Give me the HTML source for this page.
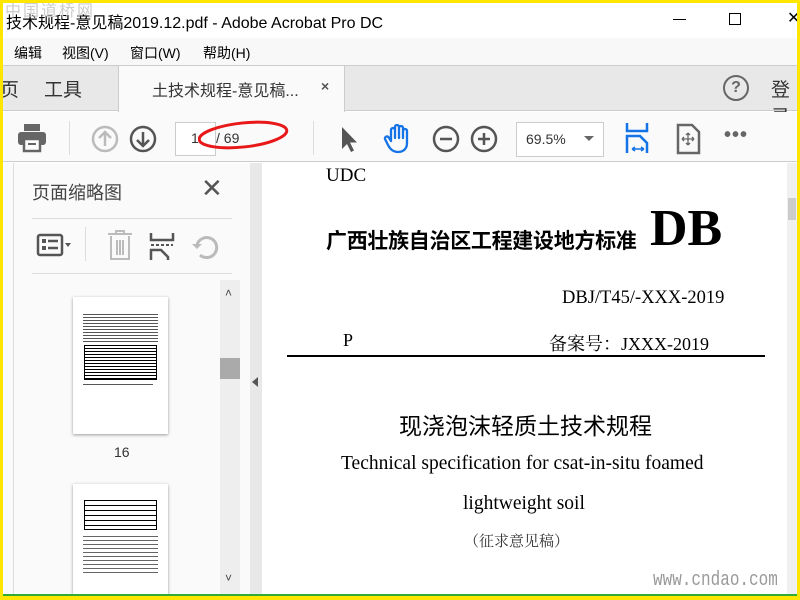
<!DOCTYPE html><html><head><meta charset="utf-8"><style>
*{margin:0;padding:0;box-sizing:border-box}
body{width:800px;height:600px;overflow:hidden;background:#ffe600;position:relative;font-family:"Liberation Sans","Noto Sans CJK SC",sans-serif}
.a{position:absolute}
.cj{font-family:"Noto Sans CJK SC",sans-serif}
.se{font-family:"Liberation Serif","Noto Serif CJK SC",serif;color:#000}
</style></head><body>
<div class="a" style="left:3px;top:3px;width:794px;height:593px;background:#fff;overflow:hidden">
 <div class="a" style="left:3px;top:6px;font-size:16px;color:#000">技术规程-意见稿2019.12.pdf - Adobe Acrobat Pro DC</div>
 <div class="a cj" style="left:2px;top:-6px;font-size:16px;color:#ccc;letter-spacing:2px">中国道桥网</div>
 <div class="a" style="left:670px;top:16px;width:13px;height:1px;background:#000"></div>
 <div class="a" style="left:726px;top:10px;width:12px;height:12px;border:1px solid #000"></div>
 <div class="a" style="left:784px;top:5px;font-size:16px">✕</div>
 <div class="a" style="left:0;top:35px;width:794px;height:28px;background:#f8f8f8;border-bottom:1px solid #ccc;font-size:14px;color:#000">
  <span class="a" style="left:11px;top:5px">编辑</span><span class="a" style="left:59px;top:5px">视图(V)</span><span class="a" style="left:127px;top:5px">窗口(W)</span><span class="a" style="left:200px;top:5px">帮助(H)</span>
 </div>
 <div class="a" style="left:0;top:63px;width:794px;height:45px;background:#e8e8e8;border-bottom:1px solid #ccc"></div>
 <div class="a" style="left:115px;top:63px;width:227px;height:46px;background:#fafafa;border-left:1px solid #ccc;border-right:1px solid #ccc"></div>
 <div class="a" style="left:-3px;top:72px;font-size:19px;color:#333">页</div>
 <div class="a" style="left:41px;top:72px;font-size:19px;color:#333">工具</div>
 <div class="a" style="left:149px;top:74px;font-size:16px;color:#333">土技术规程-意见稿...</div>
 <div class="a" style="left:318px;top:75px;font-size:14px;color:#555;font-weight:bold">×</div>
 <div class="a" style="left:720px;top:72px;width:26px;height:26px;border:2.5px solid #666;border-radius:50%;text-align:center;font-size:16px;font-weight:bold;color:#666;line-height:21px">?</div>
 <div class="a" style="left:768px;top:72px;font-size:19px;color:#333">登录</div>
 <div class="a" style="left:0;top:109px;width:794px;height:50px;background:#fafafa;border-bottom:1px solid #ccc"></div>
 <svg class="a" style="left:14px;top:120px" width="30" height="30" viewBox="0 0 30 30"><rect x="7" y="1" width="16" height="7" fill="#666"/><rect x="1" y="9" width="28" height="13" rx="3" fill="#666"/><rect x="7" y="16" width="16" height="12" fill="#fff" stroke="#666" stroke-width="2.5"/><line x1="11" y1="21" x2="19" y2="21" stroke="#666" stroke-width="2"/></svg>
 <div class="a" style="left:66px;top:118px;width:1px;height:34px;background:#ddd"></div>
 <svg class="a" style="left:87px;top:121px" width="30" height="30" viewBox="0 0 30 30"><circle cx="15" cy="15" r="12" fill="none" stroke="#bbb" stroke-width="2.5"/><path d="M15 22V8M9 14l6-6 6 6" fill="none" stroke="#bbb" stroke-width="2.5"/></svg>
 <svg class="a" style="left:125px;top:121px" width="30" height="30" viewBox="0 0 30 30"><circle cx="15" cy="15" r="12" fill="none" stroke="#555" stroke-width="2.5"/><path d="M15 8v14M9 16l6 6 6-6" fill="none" stroke="#555" stroke-width="2.5"/></svg>
 <div class="a" style="left:172px;top:119px;width:41px;height:34px;border:1px solid #ccc;background:#fff;font-size:14px;color:#333;padding:7px 0 0 15px">1</div>
 <div class="a" style="left:213px;top:127px;font-size:14px;color:#333">/ 69</div>
 <svg class="a" style="left:195px;top:112px" width="100" height="40"><ellipse cx="45" cy="20" rx="44" ry="12" fill="none" stroke="#e81818" stroke-width="3" transform="rotate(-6 45 20)"/></svg>
 <div class="a" style="left:310px;top:118px;width:1px;height:34px;background:#ddd"></div>
 <svg class="a" style="left:336px;top:121px" width="20" height="30" viewBox="0 0 20 30"><path d="M3 3v22l5-5 4 8 3-1.5-4-8h7z" fill="#555"/></svg>
 <svg class="a" style="left:379px;top:118px" width="34" height="34" viewBox="0 0 34 34"><path d="M9 20V9a2 2 0 0 1 4 0v8V6a2 2 0 0 1 4 0v11V7a2 2 0 0 1 4 0v10V10a2 2 0 0 1 4 0v12c0 6-4 9-9 9s-8-3-10-7l-3-6a2 2 0 0 1 4-1z" fill="none" stroke="#1473e6" stroke-width="2.3" stroke-linejoin="round"/></svg>
 <svg class="a" style="left:428px;top:121px" width="30" height="30" viewBox="0 0 30 30"><circle cx="15" cy="15" r="12" fill="none" stroke="#555" stroke-width="2.5"/><path d="M9 15h12" stroke="#555" stroke-width="2.5"/></svg>
 <svg class="a" style="left:466px;top:121px" width="30" height="30" viewBox="0 0 30 30"><circle cx="15" cy="15" r="12" fill="none" stroke="#555" stroke-width="2.5"/><path d="M9 15h12M15 9v12" stroke="#555" stroke-width="2.5"/></svg>
 <div class="a" style="left:513px;top:119px;width:88px;height:35px;border:1px solid #ccc;background:#fff;font-size:14px;color:#333;padding:8px 0 0 9px">69.5%</div>
 <div class="a" style="left:581px;top:133px;border-left:5px solid transparent;border-right:5px solid transparent;border-top:5px solid #666"></div>
 <svg class="a" style="left:622px;top:118px" width="26" height="34" viewBox="0 0 26 34"><path d="M2 2v8h20V2" fill="none" stroke="#1473e6" stroke-width="2.5"/><path d="M2 32V15h13l7 7v10" fill="none" stroke="#1473e6" stroke-width="2.5"/><path d="M7 28h12M7 28l3-2M7 28l3 2M19 28l-3-2M19 28l-3 2" stroke="#1473e6" stroke-width="1.5"/></svg>
 <svg class="a" style="left:673px;top:120px" width="26" height="32" viewBox="0 0 26 32"><path d="M2 2h14l7 7v21H2z" fill="none" stroke="#666" stroke-width="2.5"/><path d="M12 10v12M6 16h12M12 10l-2 2M12 10l2 2M12 22l-2-2M12 22l2-2M6 16l2-2M6 16l2 2M18 16l-2-2M18 16l-2 2" stroke="#666" stroke-width="1.3"/></svg>
 <div class="a" style="left:721px;top:121px;font-size:20px;color:#666;letter-spacing:1px;font-weight:bold">•••</div>
 <div class="a" style="left:0;top:160px;width:247px;height:433px;background:#fafafa"></div>
 <div class="a" style="left:10px;top:160px;width:1px;height:433px;background:#ddd"></div>
 <div class="a" style="left:29px;top:176px;font-size:18px;color:#444">页面缩略图</div>
 <div class="a" style="left:198px;top:170px;font-size:26px;color:#555;font-weight:300">✕</div>
 <div class="a" style="left:29px;top:215px;width:200px;height:1px;background:#ddd"></div>
 <div class="a" style="left:29px;top:270px;width:200px;height:1px;background:#ddd"></div>
 <svg class="a" style="left:33px;top:227px" width="40" height="30" viewBox="0 0 40 30"><rect x="2" y="5" width="24" height="20" rx="2" fill="none" stroke="#555" stroke-width="2.5"/><rect x="6" y="9" width="4" height="4" fill="#555"/><rect x="6" y="16" width="4" height="4" fill="#555"/><path d="M12 11h10M12 18h10" stroke="#555" stroke-width="2.5"/><path d="M29 13h6l-3 4z" fill="#555"/></svg>
 <div class="a" style="left:82px;top:224px;width:1px;height:34px;background:#ddd"></div>
 <svg class="a" style="left:103px;top:226px" width="28" height="32" viewBox="0 0 28 32"><path d="M2 5h24M10 5V2h8v3M5 7v23h18V7M11 11v15M17 11v15M14 11v15" fill="none" stroke="#bbb" stroke-width="2"/></svg>
 <svg class="a" style="left:145px;top:228px" width="28" height="30" viewBox="0 0 28 30"><path d="M3 2v7h22V2" fill="none" stroke="#555" stroke-width="2.5"/><path d="M3 14h22" stroke="#555" stroke-width="2" stroke-dasharray="3 2"/><path d="M3 29V19h10l7 7v3" fill="none" stroke="#555" stroke-width="2.5"/></svg>
 <svg class="a" style="left:188px;top:228px" width="30" height="30" viewBox="0 0 30 30"><path d="M9 24a10 10 0 1 0-3-10" fill="none" stroke="#bbb" stroke-width="3"/><path d="M1 13l5 5 5-5z" fill="#bbb"/></svg>
 <div class="a" style="left:217px;top:277px;width:20px;height:314px;background:#eee"></div>
 <div class="a" style="left:222px;top:283px;font-size:12px;color:#444">˄</div>
 <div class="a" style="left:217px;top:355px;width:20px;height:21px;background:#aaa"></div>
 <div class="a" style="left:222px;top:568px;font-size:12px;color:#444">˅</div>
 <div class="a" style="left:70px;top:294px;width:95px;height:137px;background:#fff;box-shadow:0 1px 3px #999">
  <div class="a" style="left:10px;top:15px;width:75px;height:30px;background:repeating-linear-gradient(#fff 0 2px,#555 2px 3px)"></div>
  <div class="a" style="left:11px;top:48px;width:73px;height:35px;border:1px solid #000;background:repeating-linear-gradient(#fff 0 2px,#000 2px 3px)"></div>
  <div class="a" style="left:10px;top:85px;width:70px;height:5px;background:repeating-linear-gradient(#fff 0 2px,#555 2px 3px)"></div>
 </div>
 <div class="a" style="left:111px;top:441px;font-size:14px;color:#333">16</div>
 <div class="a" style="left:70px;top:481px;width:95px;height:112px;background:#fff;box-shadow:0 1px 3px #999">
  <div class="a" style="left:11px;top:16px;width:73px;height:30px;border:1px solid #000;background:repeating-linear-gradient(#fff 0 4px,#000 4px 5px)"></div>
  <div class="a" style="left:10px;top:49px;width:75px;height:42px;background:repeating-linear-gradient(#fff 0 3px,#666 3px 4px)"></div>
 </div>
 <div class="a" style="left:247px;top:160px;width:12px;height:433px;background:#e8e8e8"></div>
 <div class="a" style="left:249px;top:374px;border-top:5px solid transparent;border-bottom:5px solid transparent;border-right:6px solid #555"></div>
 <div class="a" style="left:259px;top:160px;width:525px;height:433px;background:#fff"></div>
 <div class="a" style="left:784px;top:160px;width:10px;height:433px;background:#f0f0f0"></div>
 <div class="a" style="left:785px;top:195px;width:8px;height:22px;background:#ccc"></div>
 <div class="a se" style="left:323px;top:162px;font-size:19px">UDC</div>
 <div class="a" style="left:323px;top:222px;font-size:21px;font-weight:bold;color:#000;font-family:'Noto Sans CJK SC',sans-serif;letter-spacing:-0.3px">广西壮族自治区工程建设地方标准</div>
 <div class="a se" style="left:647px;top:196px;font-size:52px;font-weight:bold">DB</div>
 <div class="a se" style="left:559px;top:285px;font-size:18.5px">DBJ/T45/-XXX-2019</div>
 <div class="a se" style="left:340px;top:327px;font-size:18px">P</div>
 <div class="a se" style="left:546px;top:327px;font-size:18px">备案号：JXXX-2019</div>
 <div class="a" style="left:284px;top:352px;width:478px;height:2px;background:#000"></div>
 <div class="a se" style="left:396px;top:404px;font-size:23px;font-family:'Noto Sans CJK SC',sans-serif">现浇泡沫轻质土技术规程</div>
 <div class="a se" style="left:338px;top:450px;font-size:19.5px">Technical specification for csat-in-situ foamed</div>
 <div class="a se" style="left:460px;top:490px;font-size:19.5px">lightweight soil</div>
 <div class="a se" style="left:461px;top:527px;font-size:15px;font-family:'Noto Serif CJK SC',serif;color:#333">（征求意见稿）</div>
 <div class="a" style="left:650px;top:566px;font-size:20px;color:#999;font-family:'Liberation Mono',monospace;transform:scaleX(.8);transform-origin:left">www.cndao.com</div>
 <div class="a" style="left:0;top:591px;width:794px;height:2px;background:#3a3"></div>
</div>
</body></html>
